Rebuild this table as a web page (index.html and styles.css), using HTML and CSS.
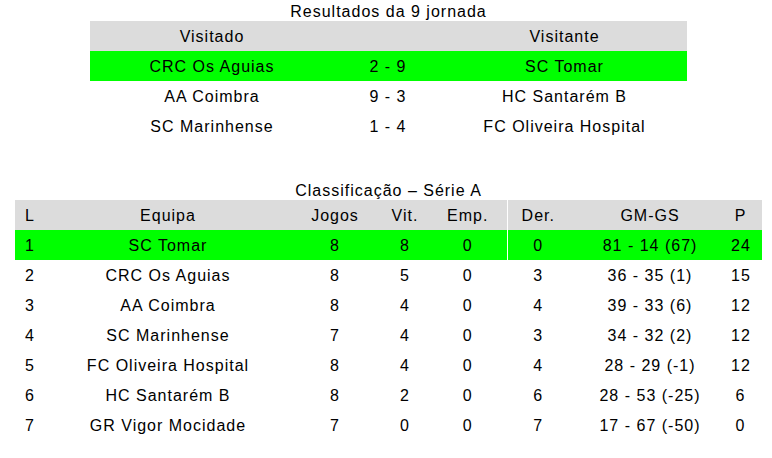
FILE: index.html
```html
<!DOCTYPE html>
<html lang="pt">
<head>
<meta charset="utf-8">
<title>Resultados</title>
<link rel="stylesheet" href="styles.css">
</head>
<body>
<section class="results">
  <div class="caption">Resultados da 9 jornada</div>
  <table class="tbl">
    <colgroup><col class="r-home"><col class="r-score"><col class="r-away"></colgroup>
    <tr class="head"><td>Visitado</td><td></td><td>Visitante</td></tr>
    <tr class="hl"><td>CRC Os Aguias</td><td>2 - 9</td><td>SC Tomar</td></tr>
    <tr><td>AA Coimbra</td><td>9 - 3</td><td>HC Santarém B</td></tr>
    <tr><td>SC Marinhense</td><td>1 - 4</td><td>FC Oliveira Hospital</td></tr>
  </table>
</section>
<section class="standings">
  <div class="caption">Classificação – Série A</div>
  <table class="tbl">
    <colgroup><col class="c-l"><col class="c-team"><col class="c-j"><col class="c-v"><col class="c-e"><col class="c-d"><col class="c-g"><col class="c-p"></colgroup>
    <tr class="head"><td class="l">L</td><td>Equipa</td><td>Jogos</td><td>Vit.</td><td>Emp.</td><td class="d">Der.</td><td>GM-GS</td><td class="p">P</td></tr>
    <tr class="hl"><td class="l">1</td><td>SC Tomar</td><td>8</td><td>8</td><td>0</td><td class="d">0</td><td>81 - 14 (67)</td><td class="p">24</td></tr>
    <tr><td class="l">2</td><td>CRC Os Aguias</td><td>8</td><td>5</td><td>0</td><td class="d">3</td><td>36 - 35 (1)</td><td class="p">15</td></tr>
    <tr><td class="l">3</td><td>AA Coimbra</td><td>8</td><td>4</td><td>0</td><td class="d">4</td><td>39 - 33 (6)</td><td class="p">12</td></tr>
    <tr><td class="l">4</td><td>SC Marinhense</td><td>7</td><td>4</td><td>0</td><td class="d">3</td><td>34 - 32 (2)</td><td class="p">12</td></tr>
    <tr><td class="l">5</td><td>FC Oliveira Hospital</td><td>8</td><td>4</td><td>0</td><td class="d">4</td><td>28 - 29 (-1)</td><td class="p">12</td></tr>
    <tr><td class="l">6</td><td>HC Santarém B</td><td>8</td><td>2</td><td>0</td><td class="d">6</td><td>28 - 53 (-25)</td><td class="p">6</td></tr>
    <tr><td class="l">7</td><td>GR Vigor Mocidade</td><td>7</td><td>0</td><td>0</td><td class="d">7</td><td>17 - 67 (-50)</td><td class="p">0</td></tr>
  </table>
</section>
</body>
</html>
```
FILE: styles.css
```css
html, body {
  margin: 0;
  padding: 0;
  background: #fff;
}
body {
  font-family: "Liberation Sans", Arial, sans-serif;
  font-size: 16px;
  letter-spacing: 1px;
  color: #000;
}
.results {
  width: 597px;
  margin-left: 90px;
}
.standings {
  width: 747px;
  margin-left: 15px;
  margin-top: 38px;
}
.caption {
  height: 21px;
  line-height: 23px;
  text-align: center;
}
.tbl {
  width: 100%;
  border-collapse: collapse;
  table-layout: fixed;
}
.tbl td {
  box-sizing: border-box;
  height: 30px;
  padding: 1px 0 0;
  text-align: center;
  white-space: nowrap;
  vertical-align: middle;
  line-height: 29px;
}
.head td { background: #dcdcdc; }
.hl td { background: #00ff00; }
.r-home { width: 244px; }
.r-score { width: 108px; }
.r-away { width: 245px; }
.c-l { width: 32px; }
.c-team { width: 242px; }
.c-j { width: 92px; }
.c-v { width: 48px; }
.c-e { width: 78px; }
.c-d { width: 62px; }
.c-g { width: 162px; }
.c-p { width: 31px; }
.tbl td.l {
  text-align: left;
  padding-left: 10px;
}
.tbl td.d { border-left: 1px solid #fff; }
.tbl td.p { padding-right: 12px; }
```
